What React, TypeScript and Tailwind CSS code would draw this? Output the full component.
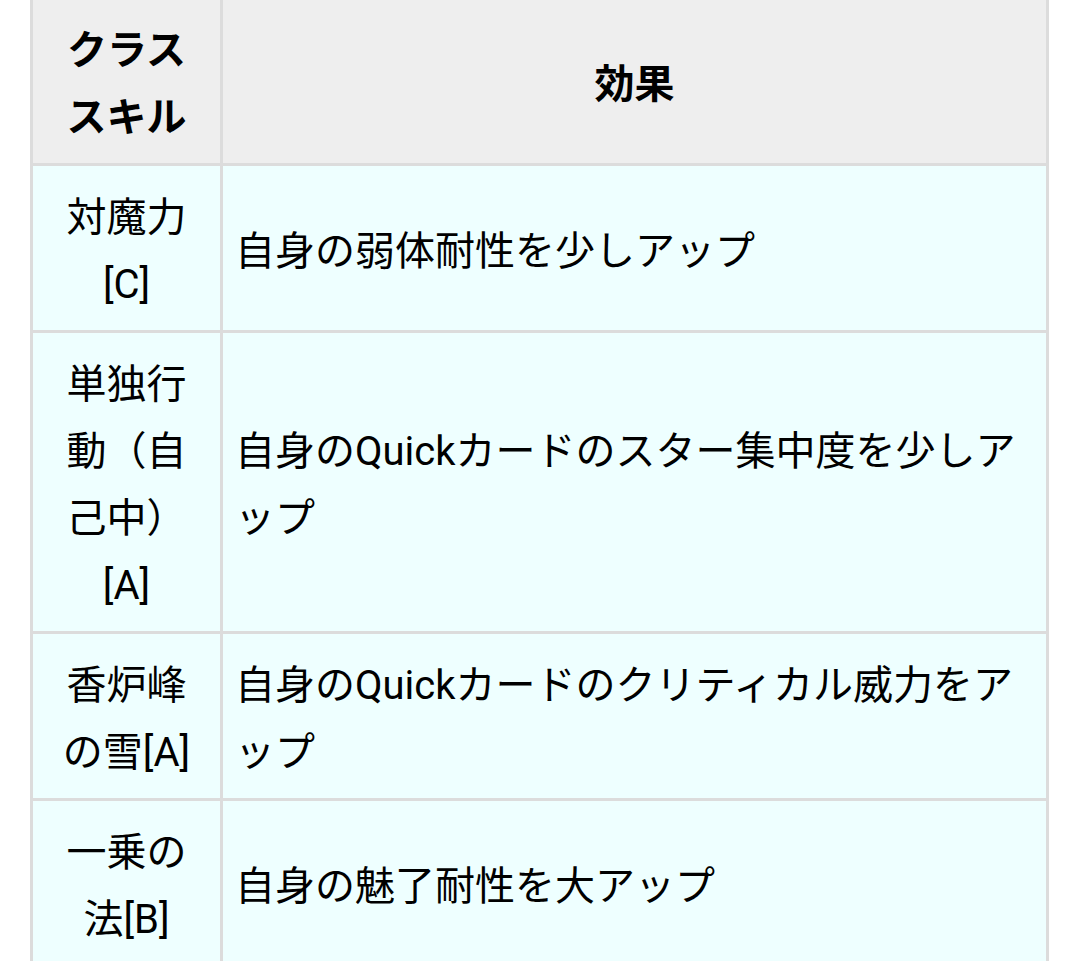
const rows: [string, string][] = [
  ["対魔力[C]", "自身の弱体耐性を少しアップ"],
  ["単独行動（自己中）[A]", "自身のQuickカードのスター集中度を少しアップ"],
  ["香炉峰の雪[A]", "自身のQuickカードのクリティカル威力をアップ"],
  ["一乗の法[B]", "自身の魅了耐性を大アップ"],
];

export default function App() {
  return (
    <div className="min-h-screen overflow-hidden bg-white px-[30px] text-black [font-family:Roboto,'Noto_Sans_CJK_JP',sans-serif]">
      <table className="-mt-[4px] w-full table-fixed border-collapse text-[40px] leading-[67px]">
        <colgroup>
          <col className="w-[190px]" />
          <col />
        </colgroup>
        <thead>
          <tr className="bg-[#eeeeee]">
            <th className="border-[3px] border-[#dcdcdc] px-[24px] pt-[18px] pb-[12px] text-center font-bold">
              クラススキル
            </th>
            <th className="border-[3px] border-[#dcdcdc] px-[12px] pt-[18px] pb-[12px] text-center font-bold">
              効果
            </th>
          </tr>
        </thead>
        <tbody>
          {rows.map(([skill, effect]) => (
            <tr key={skill} className="bg-[#eeffff]">
              <td className="border-[3px] border-[#dcdcdc] px-[24px] pt-[18px] pb-[12px] text-center align-middle">
                {skill}
              </td>
              <td className="border-[3px] border-[#dcdcdc] px-[12px] pt-[18px] pb-[12px] align-middle">
                {effect}
              </td>
            </tr>
          ))}
        </tbody>
      </table>
    </div>
  );
}
